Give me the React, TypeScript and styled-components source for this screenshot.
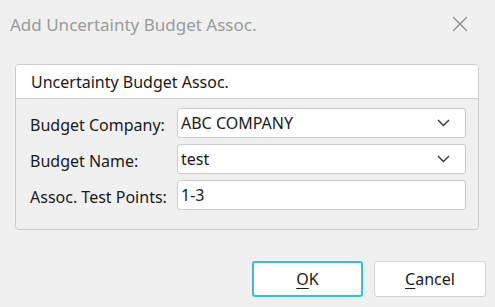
import React from 'react';
import styled, { createGlobalStyle } from 'styled-components';

const GlobalStyle = createGlobalStyle`
  html, body {
    margin: 0;
    padding: 0;
    background: #f0f0f0;
  }
  body {
    font-family: 'Noto Sans', 'Open Sans', sans-serif;
    color: #1a1a1a;
  }
`;

const Dialog = styled.div`
  width: 495px;
  height: 307px;
  box-sizing: border-box;
  background: #f0f0f0;
  display: flex;
  flex-direction: column;
`;

const TitleBar = styled.div`
  height: 48px;
  display: flex;
  align-items: center;
  justify-content: space-between;
  padding: 0 27px 0 10px;
`;

const Title = styled.div`
  font-size: 17px;
  color: #9a9a9a;
  margin-top: 0px;
`;

const CloseButton = styled.div`
  width: 16px;
  height: 16px;
  display: flex;
`;

const Group = styled.div`
  margin: 16px 16px 0 15px;
  border: 1px solid #cccccc;
  border-radius: 4px;
  overflow: hidden;
`;

const GroupHeader = styled.div`
  height: 33px;
  background: #ffffff;
  border-bottom: 1px solid #cccccc;
  display: flex;
  align-items: center;
  padding-left: 15px;
  font-size: 16px;
`;

const GroupBody = styled.div`
  display: grid;
  grid-template-columns: 147px 1fr;
  row-gap: 6px;
  padding: 9px 12px 19px 14px;
  align-items: center;
`;

const Label = styled.div`
  font-size: 16px;
  padding-top: 3px;
`;

const Field = styled.div`
  height: 30px;
  box-sizing: border-box;
  background: #ffffff;
  border: 1px solid #cccccc;
  border-radius: 3px;
  display: flex;
  align-items: center;
  justify-content: space-between;
  padding: 0 15px 0 3px;
  font-size: 16px;
`;

const Footer = styled.div`
  display: flex;
  justify-content: flex-end;
  gap: 11px;
  padding: 31px 9px 0 0;
`;

const Button = styled.div<{ $primary?: boolean }>`
  width: ${(p) => (p.$primary ? '111px' : '112px')};
  height: 36px;
  box-sizing: border-box;
  background: #ffffff;
  border: ${(p) => (p.$primary ? '2px solid #38bde1' : '1px solid #d4d4d4')};
  border-radius: 3px;
  display: flex;
  align-items: center;
  justify-content: center;
  font-size: 16px;
  u {
    text-decoration-thickness: 1px;
    text-underline-offset: 3px;
  }
`;

const Chevron = () => (
  <svg width="13" height="8" viewBox="0 0 13 8">
    <path d="M1 1 L6.5 6.5 L12 1" fill="none" stroke="#333" strokeWidth="1.4" />
  </svg>
);

const CloseIcon = () => (
  <svg width="16" height="16" viewBox="0 0 16 16">
    <path d="M1 1 L15 15 M15 1 L1 15" stroke="#8a8a8a" strokeWidth="1.3" />
  </svg>
);

const App = () => {
  return (
    <Dialog>
      <GlobalStyle />
      <TitleBar>
        <Title>Add Uncertainty Budget Assoc.</Title>
        <CloseButton>
          <CloseIcon />
        </CloseButton>
      </TitleBar>
      <Group>
        <GroupHeader>Uncertainty Budget Assoc.</GroupHeader>
        <GroupBody>
          <Label>Budget Company:</Label>
          <Field>
            ABC COMPANY
            <Chevron />
          </Field>
          <Label>Budget Name:</Label>
          <Field>
            test
            <Chevron />
          </Field>
          <Label>Assoc. Test Points:</Label>
          <Field>1-3</Field>
        </GroupBody>
      </Group>
      <Footer>
        <Button $primary>
          <span>
            <u>O</u>K
          </span>
        </Button>
        <Button>
          <span>
            <u>C</u>ancel
          </span>
        </Button>
      </Footer>
    </Dialog>
  );
};

export default App;
